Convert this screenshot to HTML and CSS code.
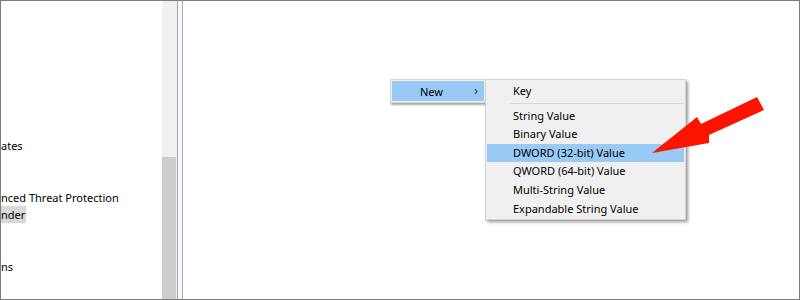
FILE: index.html
```html
<!DOCTYPE html>
<html>
<head>
<meta charset="utf-8">
<link rel="stylesheet" href="styles.css">
</head>
<body>
<div class="frame">
  <div class="tree">
    <div class="row"></div><div class="row"></div><div class="row"></div><div class="row"></div>
    <div class="row"></div><div class="row"></div><div class="row"></div><div class="row"></div>
    <div class="row"><span>ates</span></div>
    <div class="row"></div>
    <div class="row"></div>
    <div class="row"><span>nced Threat Protection</span></div>
    <div class="row"><span class="sel">nder</span></div>
    <div class="row"></div>
    <div class="row"></div>
    <div class="row"><span>ns</span></div>
  </div>
  <div class="scrollbar"><div class="track"></div><div class="thumb"></div></div>
  <div class="splitter"></div>
  <div class="pane"></div>

  <div class="menu parent">
    <div class="pitem"><span class="plabel">New</span><span class="chev">&#x203A;</span></div>
  </div>
  <div class="menu sub">
    <div class="item">Key</div>
    <div class="sep"></div>
    <div class="item">String Value</div>
    <div class="item">Binary Value</div>
    <div class="item hl">DWORD (32-bit) Value</div>
    <div class="item">QWORD (64-bit) Value</div>
    <div class="item">Multi-String Value</div>
    <div class="item">Expandable String Value</div>
  </div>

  <svg class="arrow" width="800" height="300" viewBox="0 0 800 300">
    <polygon points="652,153 697,117 701,124 757,97 764,110 709,135 709,143" fill="#fd1400"/>
  </svg>
</div>
</body>
</html>
```

FILE: styles.css
```css
* { box-sizing: border-box; }
html, body { margin: 0; padding: 0; background: #fff; }
.frame {
  position: relative;
  width: 800px;
  height: 300px;
  border: 1px solid #7d7d7d;
  display: flex;
  overflow: hidden;
  font-family: "Noto Sans", "Open Sans", sans-serif;
  font-size: 11px;
  color: #000;
}
.tree {
  width: 161px;
  flex: none;
  display: flex;
  flex-direction: column;
  padding-top: 135.7px;
  overflow: hidden;
  margin-top: -138.7px;
}
.tree .row {
  height: 17.33px;
  line-height: 17.33px;
  white-space: nowrap;
}
.tree .sel { background: #d9d9d9; padding-right: 1px; display: inline-block; height: 17.33px; }
.scrollbar {
  width: 15px;
  flex: none;
  display: flex;
  flex-direction: column;
  background: #f0f0f0;
}
.scrollbar .track { height: 156px; flex: none; }
.scrollbar .thumb { flex: 1; background: #cdcdcd; margin-right: 1px; }
.splitter {
  width: 6px;
  flex: none;
  border-left: 1px solid #a3a3b4;
  border-right: 1px solid #a9a9b2;
  background: #f7f7f7;
}
.pane { flex: 1; background: #fff; }

.menu {
  position: absolute;
  background: #f0f0f0;
  border: 1px solid #d4d4d4;
}
.parent {
  left: 389px;
  top: 78px;
  width: 100px;
  height: 24px;
  padding: 1px;
  box-shadow: 1px 2px 2px rgba(0,0,0,0.35);
}
.pitem {
  height: 20px;
  width: 92px;
  background: #99c9f5;
  display: flex;
  align-items: center;
  position: relative;
}
.plabel { margin-left: 28px; }
.chev { position: absolute; left: 82px; top: 0px; font-size: 13px; line-height: 18px; color: #333; }
.sub {
  left: 484px;
  top: 78px;
  width: 201px;
  height: 141px;
  padding: 2px 1px 1px 1px;
  box-shadow: 2px 2px 3px rgba(0,0,0,0.4);
}
.item {
  height: 18.6px;
  line-height: 18.6px;
  padding-left: 26px;
  white-space: nowrap;
}
.item.hl { background: #99c9f5; }
.sep {
  margin-left: 23px;
  border-top: 1px solid #d7d7d7;
  margin-top: 2.5px;
  height: 3.5px;
}
.arrow { position: absolute; left: -1px; top: -1px; pointer-events: none; }
```
